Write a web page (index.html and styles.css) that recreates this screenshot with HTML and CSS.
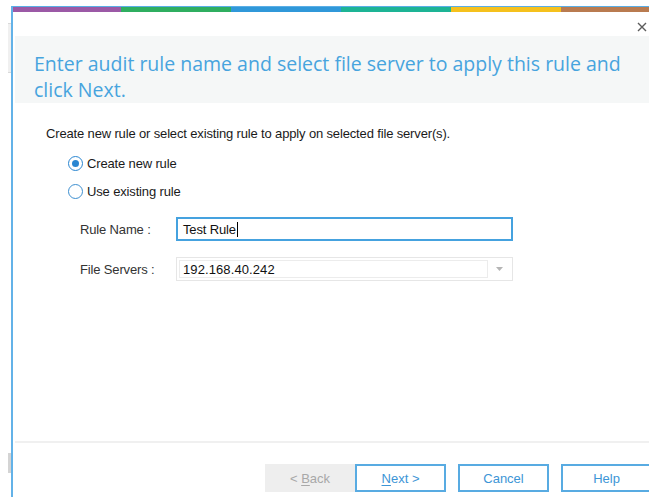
FILE: index.html
```html
<!DOCTYPE html>
<html>
<head>
<meta charset="utf-8">
<link rel="stylesheet" href="styles.css">
</head>
<body>
<div class="desk">
  <div class="behind behind-top"></div>
  <div class="behind behind-bottom"></div>
  <div class="window">
    <div class="stripe">
      <span class="seg purple"></span>
      <span class="seg green"></span>
      <span class="seg blue"></span>
      <span class="seg teal"></span>
      <span class="seg yellow"></span>
      <span class="seg brown"></span>
    </div>
    <div class="titlebar">
      <svg class="close" width="10" height="10" viewBox="0 0 10 10"><path d="M1 1L9 9M9 1L1 9" stroke="#5c5c5c" stroke-width="1.4"/></svg>
    </div>
    <div class="heading">
      <h1>Enter audit rule name and select file server to apply this rule and click Next.</h1>
    </div>
    <div class="content">
      <p class="intro">Create new rule or select existing rule to apply on selected file server(s).</p>
      <label class="radio-row"><span class="radio checked"></span>Create new rule</label>
      <label class="radio-row"><span class="radio"></span>Use existing rule</label>
      <div class="field-row first">
        <span class="field-label">Rule Name :</span>
        <div class="textbox focused"><span>Test Rule</span><span class="caret"></span></div>
      </div>
      <div class="field-row">
        <span class="field-label">File Servers :</span>
        <div class="combo">
          <div class="combo-value">192.168.40.242</div>
          <div class="combo-arrow"><svg width="7" height="4" viewBox="0 0 7 4"><path d="M0 0h7L3.5 4z" fill="#b5b5b5"/></svg></div>
        </div>
      </div>
    </div>
    <div class="footer">
      <div class="divider"></div>
      <div class="buttons">
        <button class="btn disabled">&lt; <u>B</u>ack</button>
        <button class="btn"><u>N</u>ext &gt;</button>
        <button class="btn gap">Cancel</button>
        <button class="btn gap">Help</button>
      </div>
    </div>
  </div>
</div>
</body>
</html>
```
FILE: styles.css
```css
html, body {
  margin: 0;
  padding: 0;
  background: #ffffff;
  overflow: hidden;
}

.desk {
  position: relative;
  width: 649px;
  height: 497px;
  padding: 6px 0 0 11px;
  box-sizing: border-box;
}

/* slivers of the window underneath */
.behind {
  position: absolute;
  left: 8px;
  width: 3px;
  background: #e6e6e6;
}
.behind-top {
  top: 23px;
  height: 48px;
  background: #f0f0f0;
  border-top: 1px solid #d9d9d9;
  border-bottom: 1px solid #d9d9d9;
}
.behind-bottom {
  top: 453px;
  height: 20px;
  background: #d4d4d4;
}

.window {
  width: 660px;
  height: 491px;
  border-top: 1px solid #5aaee6;
  border-left: 2px solid #63b2e8;
  box-sizing: border-box;
  display: flex;
  flex-direction: column;
  font-family: "Liberation Sans", Arial, sans-serif;
}

.stripe {
  display: flex;
  height: 5px;
  flex: none;
}
.seg { width: 110px; flex: none; }
.seg.purple { width: 108px; background: #9b59a6; }
.seg.green  { background: #2fae60; }
.seg.blue   { background: #3098d9; }
.seg.teal   { background: #1db495; }
.seg.yellow { background: #f5c11d; }
.seg.brown  { background: #b97b50; }

.titlebar {
  height: 24px;
  flex: none;
  position: relative;
}
.close {
  position: absolute;
  left: 624px;
  top: 10px;
}

.heading {
  margin-left: 2px;
  height: 67px;
  flex: none;
  background: #f5f7f7;
  padding: 15px 0 0 19px;
  box-sizing: border-box;
}
.heading h1 {
  margin: 0;
  width: 600px;
  font-family: "Open Sans", sans-serif;
  font-weight: 400;
  font-size: 19.5px;
  line-height: 26px;
  color: #47a4de;
}

.content {
  flex: 1;
  padding: 0 0 0 33px;
  font-size: 13px;
  letter-spacing: -0.15px;
  color: #1a1a1a;
}

.intro {
  margin: 24px 0 8px;
  line-height: 14px;
}

.radio-row {
  display: flex;
  align-items: center;
  height: 28px;
  margin-left: 22px;
}
.radio {
  width: 15px;
  height: 15px;
  border: 1px solid #3d8fd0;
  border-radius: 50%;
  box-sizing: border-box;
  margin-right: 4px;
  display: flex;
  align-items: center;
  justify-content: center;
  background: #fff;
}
.radio.checked {
  border-color: #2a86d1;
}
.radio.checked::after {
  content: "";
  width: 7px;
  height: 7px;
  border-radius: 50%;
  background: #2a86d1;
}

.field-row {
  display: flex;
  align-items: center;
  margin-top: 16px;
}
.field-row.first { margin-top: 12px; }
.field-label {
  width: 96px;
  padding-left: 34px;
  color: #333;
}
.textbox, .combo {
  width: 337px;
  height: 24px;
  box-sizing: border-box;
  display: flex;
  align-items: center;
}
.textbox {
  border: 2px solid #45a2df;
  padding-left: 5px;
  color: #111;
}
.caret {
  width: 1px;
  height: 15px;
  background: #000;
  margin-left: 1px;
}
.combo {
  border: 1px solid #e6e6e6;
  padding: 2px;
}
.combo-value {
  flex: 1;
  height: 100%;
  border: 1px solid #ececec;
  box-sizing: border-box;
  display: flex;
  align-items: center;
  padding-left: 3px;
  color: #111;
  letter-spacing: 0.1px;
}
.combo-arrow {
  width: 22px;
  display: flex;
  justify-content: center;
}

.footer {
  flex: none;
  height: 56px;
}
.divider {
  margin-left: 2px;
  height: 2px;
  background: #f0f0f0;
}
.buttons {
  display: flex;
  margin: 21px 0 0 252px;
}
.btn {
  width: 91px;
  height: 28px;
  box-sizing: border-box;
  border: 2px solid #58abe2;
  background: #fff;
  color: #3d95d6;
  font-family: "Liberation Sans", Arial, sans-serif;
  font-size: 13px;
  padding: 0;
}
.btn.disabled {
  width: 90px;
  border-color: #eeeeee;
  background: #eeeeee;
  color: #a8a8a8;
}
.btn.gap { margin-left: 12px; }
.btn u { text-decoration-thickness: 1px; text-underline-offset: 2px; }
```
